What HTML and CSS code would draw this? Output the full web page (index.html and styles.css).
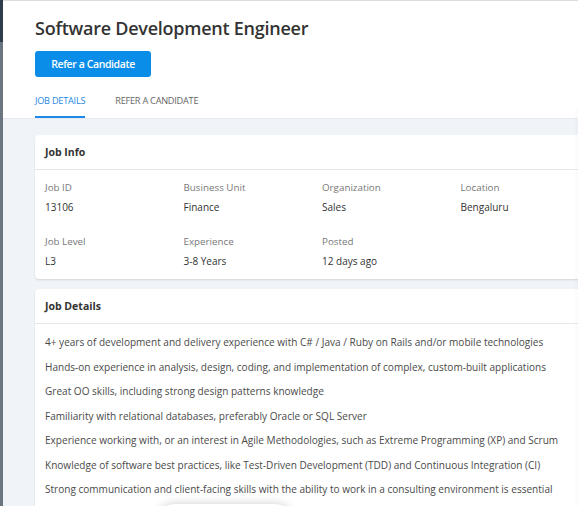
FILE: index.html
```html
<!DOCTYPE html>
<html lang="en">
<head>
<meta charset="utf-8">
<title>Software Development Engineer</title>
<link rel="stylesheet" href="styles.css">
</head>
<body>
<div class="app">
  <div class="sidebar"></div>
  <div class="main">
    <header class="header">
      <h1 class="title">Software Development Engineer</h1>
      <button class="btn">Refer a Candidate</button>
      <nav class="tabs">
        <span class="tab active">JOB DETAILS</span>
        <span class="tab">REFER A CANDIDATE</span>
      </nav>
    </header>
    <section class="content">
      <div class="card">
        <div class="card-head">Job Info</div>
        <div class="info-grid">
          <div class="field"><div class="label">Job ID</div><div class="value">13106</div></div>
          <div class="field"><div class="label">Business Unit</div><div class="value">Finance</div></div>
          <div class="field"><div class="label">Organization</div><div class="value">Sales</div></div>
          <div class="field"><div class="label">Location</div><div class="value">Bengaluru</div></div>
          <div class="field"><div class="label">Job Level</div><div class="value">L3</div></div>
          <div class="field"><div class="label">Experience</div><div class="value">3-8 Years</div></div>
          <div class="field"><div class="label">Posted</div><div class="value">12 days ago</div></div>
        </div>
      </div>
      <div class="card">
        <div class="card-head">Job Details</div>
        <ul class="details">
          <li>4+ years of development and delivery experience with C# / Java / Ruby on Rails and/or mobile technologies</li>
          <li>Hands-on experience in analysis, design, coding, and implementation of complex, custom-built applications</li>
          <li>Great OO skills, including strong design patterns knowledge</li>
          <li>Familiarity with relational databases, preferably Oracle or SQL Server</li>
          <li>Experience working with, or an interest in Agile Methodologies, such as Extreme Programming (XP) and Scrum</li>
          <li>Knowledge of software best practices, like Test-Driven Development (TDD) and Continuous Integration (CI)</li>
          <li>Strong communication and client-facing skills with the ability to work in a consulting environment is essential</li>
        </ul>
      </div>
    </section>
    <div class="edge-shade"></div>
    <div class="toast"></div>
  </div>
</div>
</body>
</html>
```

FILE: styles.css
```css
html, body {
  margin: 0;
  padding: 0;
  height: 100%;
  overflow: hidden;
}
body {
  font-family: "Open Sans", "Noto Sans", sans-serif;
  color: #333;
  background: #f0f3f7;
}
.app {
  display: flex;
  height: 506px;
}
.sidebar {
  width: 3px;
  flex: none;
  background: linear-gradient(to bottom, #2e3d4c 0, #2e3d4c 42px, #6b7580 42px, #6b7580 100%);
}
.main {
  flex: 1;
  position: relative;
  overflow: hidden;
  border-top: 1px solid #dcdcdc;
  background: #f0f3f7;
}
.header {
  background: #fff;
  padding: 13px 32px 0;
  border-bottom: 1px solid #e4e7eb;
}
.title {
  margin: 0;
  font-size: 18px;
  font-weight: 600;
  line-height: 28px;
  color: #333;
  letter-spacing: -0.25px;
}
.btn {
  display: block;
  margin-top: 9px;
  width: 116px;
  height: 26px;
  padding: 0;
  border: 0;
  border-radius: 3px;
  background: #0a8de9;
  color: #fff;
  font-family: inherit;
  font-size: 10.5px;
  font-weight: 600;
  letter-spacing: -0.4px;
}
.tabs {
  display: flex;
  gap: 30px;
  margin-top: 14px;
}
.tab {
  padding: 2px 0 7px;
  line-height: 16px;
  font-size: 9.2px;
  color: #666;
  border-bottom: 2px solid transparent;
  letter-spacing: -0.25px;
}
.tab.active {
  color: #1e88e5;
  border-bottom-color: #1e88e5;
}
.content {
  padding: 16px 0 0 32px;
}
.card {
  width: 620px;
  background: #fff;
  border-radius: 4px;
  box-shadow: 0 1px 2px rgba(0, 0, 0, 0.12);
  margin-bottom: 10px;
}
.card-head {
  height: 34px;
  line-height: 34px;
  padding-left: 10px;
  font-size: 10.5px;
  font-weight: 700;
  color: #333;
  border-bottom: 1px solid #e6e8eb;
}
.info-grid {
  display: grid;
  grid-template-columns: repeat(4, 138.5px);
  row-gap: 19px;
  padding: 10px 10px 10px;
}
.label {
  font-size: 9.8px;
  line-height: 16px;
  color: #777;
}
.value {
  margin-top: 3px;
  font-size: 10px;
  line-height: 16px;
  color: #333;
}
.details {
  list-style: none;
  margin: 0;
  padding: 6px 10px 10px;
}
.details li {
  font-size: 10.05px;
  line-height: 24.5px;
  color: #4a4a4a;
  white-space: nowrap;
}
.edge-shade {
  position: absolute;
  right: 0;
  top: 107px;
  bottom: 0;
  width: 5px;
  background: linear-gradient(to right, rgba(0, 0, 0, 0), rgba(0, 0, 0, 0.02));
}
.toast {
  position: absolute;
  left: 152px;
  top: 503px;
  width: 140px;
  height: 40px;
  border-radius: 20px;
  background: #fff;
  box-shadow: 0 -1px 8px rgba(0, 0, 0, 0.16);
}
```
